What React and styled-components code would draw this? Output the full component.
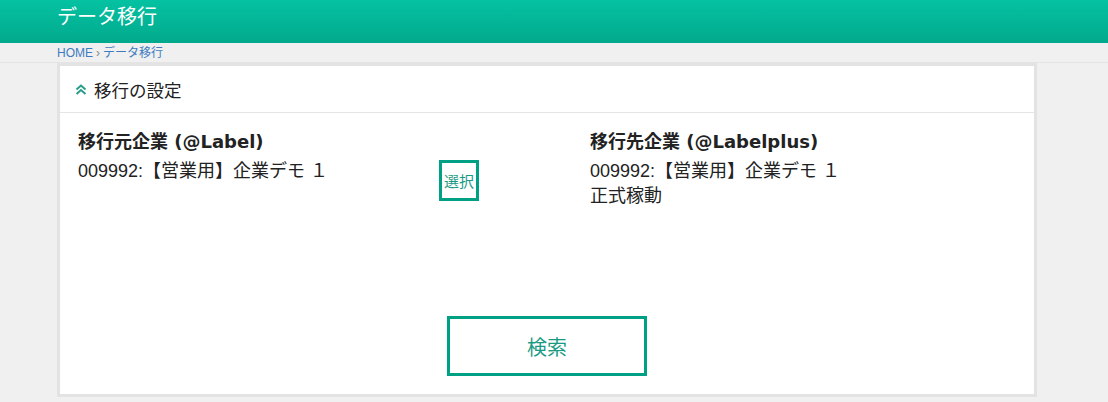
import React from 'react'
import styled, { createGlobalStyle } from 'styled-components'

const GlobalStyle = createGlobalStyle`
    body{
        margin:0;
        background-color:#f0f0f0;
        font-family:"Liberation Sans", "Noto Sans CJK JP", sans-serif;
        color:#222;
    }
`

function DoubleUp() {
    return (
        <svg width="12" height="11" viewBox="0 0 12 11">
            <path d="M1.5 5.5 L6 1.5 L10.5 5.5 M1.5 10 L6 6 L10.5 10" fill="none" stroke="#2a9d88" strokeWidth="2" />
        </svg>
    )
}

function App() {
    return (
        <>
            <GlobalStyle />
            <Header>データ移行</Header>
            <Breadcrumb>
                <Crumb>HOME</Crumb>
                <Sep>›</Sep>
                <Crumb>データ移行</Crumb>
            </Breadcrumb>
            <Card>
                <CardHead>
                    <DoubleUp />
                    <span>移行の設定</span>
                </CardHead>
                <CardBody>
                    <Columns>
                        <SourceCol>
                            <Info>
                                <Label>移行元企業 (@Label)</Label>
                                <Value>009992:【営業用】企業デモ １</Value>
                            </Info>
                            <SmallButton>選択</SmallButton>
                        </SourceCol>
                        <Info>
                            <Label>移行先企業 (@Labelplus)</Label>
                            <Value>009992:【営業用】企業デモ １</Value>
                            <Value>正式稼動</Value>
                        </Info>
                    </Columns>
                    <SearchButton>検索</SearchButton>
                </CardBody>
            </Card>
        </>
    )
}

export default App


const Header = styled.div`
    height:43px;
    box-sizing:border-box;
    padding-left:57px;
    background:linear-gradient(#04c2a2, #02a98c);
    color:#fff;
    font-size:20px;
    line-height:34px;
`
const Breadcrumb = styled.div`
    height:20px;
    box-sizing:border-box;
    padding-left:57px;
    border-bottom:1px solid #e4e4e4;
    display:flex;
    align-items:center;
    gap:3px;
    font-size:12px;
    line-height:20px;
`
const Crumb = styled.span`
    color:#3d7cc0;
`
const Sep = styled.span`
    color:#888;
`
const Card = styled.div`
    margin-left:57px;
    width:980px;
    height:334px;
    box-sizing:border-box;
    border:3px solid #e3e3e3;
    background-color:#fff;
    display:flex;
    flex-direction:column;
`
const CardHead = styled.div`
    height:47px;
    box-sizing:border-box;
    border-bottom:1px solid #e5e5e5;
    padding-left:15px;
    display:flex;
    align-items:center;
    gap:7px;
    font-size:17.5px;
    color:#222;
`
const CardBody = styled.div`
    flex:1;
    padding:17px 18px 18px;
    display:flex;
    flex-direction:column;
    align-items:stretch;
`
const Columns = styled.div`
    display:grid;
    grid-template-columns:512px 1fr;
`
const SourceCol = styled.div`
    display:flex;
    align-items:flex-start;
`
const Info = styled.div`
    width:361px;
`
const Label = styled.div`
    font-family:"DejaVu Sans", "Noto Sans CJK JP", sans-serif;
    font-size:18px;
    font-weight:700;
    line-height:24px;
    margin-bottom:5px;
    white-space:nowrap;
`
const Value = styled.div`
    font-size:18px;
    line-height:25px;
    color:#222;
    white-space:nowrap;
`
const SmallButton = styled.button`
    margin-top:30px;
    width:40px;
    height:41px;
    box-sizing:border-box;
    border:3px solid #00a085;
    background:#fff;
    color:#1a9a85;
    font-family:"Noto Sans CJK JP", sans-serif;
    font-size:15px;
    padding:0;
    cursor:pointer;
`
const SearchButton = styled.button`
    margin-top:auto;
    align-self:center;
    width:200px;
    height:60px;
    box-sizing:border-box;
    border:3px solid #00a085;
    background:#fff;
    color:#1a9a85;
    font-family:"Noto Sans CJK JP", sans-serif;
    font-size:20px;
    cursor:pointer;
`
